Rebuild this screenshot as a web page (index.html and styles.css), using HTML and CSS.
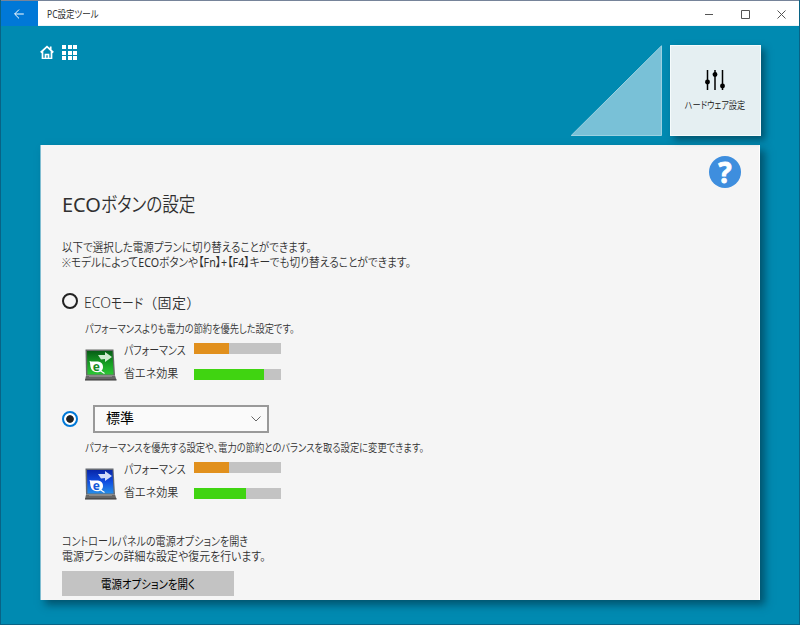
FILE: index.html
```html
<!DOCTYPE html>
<html lang="ja">
<head>
<meta charset="utf-8">
<title>PC設定ツール</title>
<link rel="stylesheet" href="styles.css">
</head>
<body>
<div class="window">
  <header class="titlebar">
    <button class="back" aria-label="戻る"><svg width="10" height="10" viewBox="0 0 10 10"><path d="M9.8 5H.8M5 .6.6 5 5 9.4"/></svg></button>
    <span class="app-name">PC設定ツール</span>
    <svg class="controls" width="80" height="10" viewBox="0 0 80 10"><path d="M0 5.5h8M36.5 1.5h8v8h-8zM72.5 1.5l8 8M80.500 1.500l-8 8"/></svg>
  </header>
  <nav class="top">
    <svg class="home" width="14" height="14" viewBox="0 0 14 14"><path d="M.7 7.500 7 1.700 13.300 7.500M2.500 6.500v7h9v-7M10.700 1.500v3"/><path d="M5.500 13.500v-4h3v4"/></svg>
    <span class="apps"><i></i><i></i><i></i><i></i><i></i><i></i><i></i><i></i><i></i></span>
    <svg class="triangle" width="92" height="91" viewBox="0 0 92 91"><path d="M91.500.8v89.700H1.200z"/></svg>
    <div class="tile">
      <svg width="20" height="20" viewBox="0 0 20 20"><path d="M2.500 0v20M10 0v20M17.500 0v20"/><circle cx="2.500" cy="12" r="1.700"/><circle cx="10" cy="4.500" r="1.700"/><circle cx="17.500" cy="16" r="1.700"/></svg>
      <span class="tile-label">ハードウェア設定</span>
    </div>
  </nav>
  <main class="panel">
    <div class="help"><span>?</span></div>
    <h1><span class="latin">ECO</span><span class="kana-title">ボタンの設定</span></h1>
    <div class="intro">
      <p class="intro-a">以下で選択した電源プランに切り替えることができます。</p>
      <p class="intro-b">※モデルによって<span class="latin">ECO</span>ボタンや【<span class="latin">Fn</span>】<span class="latin">+</span>【<span class="latin">F4</span>】キーでも切り替えることができます。</p>
    </div>
    <section class="plan plan-eco">
      <div class="choice"><span class="radio"></span><span class="eco-name">ECO<span class="mode">モード</span><span class="fixed">（固定）</span></span></div>
      <p class="desc desc-a">パフォーマンスよりも電力の節約を優先した設定です。</p>
      <div class="stats">
        <svg class="laptop" width="32" height="32" viewBox="0 0 32 32">
          <defs><linearGradient id="g" x1="0" y1="0" x2="0" y2="1"><stop offset="0" stop-color="#075d16"/><stop offset=".5" stop-color="#159b22"/><stop offset="1" stop-color="#2cc735"/></linearGradient></defs>
          <path d="M.5.5h28l1.500 26H1z" fill="#666b67"/><path d="M2 2h25.500l1 23.500H2.500z" fill="url(#g)"/><path d="M1 26.500h29l1.500 4.500H0z" fill="#666"/><path d="M0 30.500h31.500v1H0z" fill="#333"/><path d="M4 27.500h23" stroke="#888"/>
          <path d="M13 6h7V3l7 5-7 5v-3l-4 .500z" fill="#e7f7e7" opacity=".9"/><path d="M4.500 12c4 1.500 13.500-2 13.500 6 0 6.500-10 7-12 1.500-1-2.500-.5-4.500-1.500-7.500z" fill="#fff"/><path d="m15 21.500 4.500 3" stroke="#fff" stroke-width="1.200"/><text x="7.800" y="21.500" fill="#178b25">e</text>
        </svg>
        <div class="meters"><div class="meter"><span class="label"><span class="perf">パフォーマンス</span></span><b class="bar orange p40"></b></div><div class="meter"><span class="label second"><span class="save">省エネ効果</span></span><b class="bar green p80"></b></div></div>
      </div>
    </section>
    <section class="plan plan-std">
      <div class="choice"><span class="radio checked"></span><div class="select"><span>標準</span><svg width="10" height="6" viewBox="0 0 10 6"><path d="M.5.5 5 5 9.500.5"/></svg></div></div>
      <p class="desc desc-b">パフォーマンスを優先する設定や、電力の節約とのバランスを取る設定に変更できます。</p>
      <div class="stats">
        <svg class="laptop" width="32" height="32" viewBox="0 0 32 32">
          <defs><linearGradient id="b" x1="0" y1="0" x2="0" y2="1"><stop offset="0" stop-color="#0826a8"/><stop offset=".5" stop-color="#104de0"/><stop offset="1" stop-color="#258ee8"/></linearGradient></defs>
          <path d="M.5.5h28l1.500 26H1z" fill="#646973"/><path d="M2 2h25.500l1 23.500H2.500z" fill="url(#b)"/><path d="M1 26.500h29l1.500 4.500H0z" fill="#666"/><path d="M0 30.500h31.500v1H0z" fill="#333"/><path d="M4 27.500h23" stroke="#888"/>
          <path d="M13 6h7V3l7 5-7 5v-3l-4 .500z" fill="#e7efff" opacity=".9"/><path d="M4.500 12c4 1.500 13.500-2 13.500 6 0 6.500-10 7-12 1.500-1-2.500-.5-4.500-1.500-7.500z" fill="#fff"/><path d="m15 21.500 4.500 3" stroke="#fff" stroke-width="1.200"/><text x="7.800" y="21.500" fill="#1459d8">e</text>
        </svg>
        <div class="meters"><div class="meter"><span class="label"><span class="perf">パフォーマンス</span></span><b class="bar orange p40"></b></div><div class="meter"><span class="label second"><span class="save">省エネ効果</span></span><b class="bar green p60"></b></div></div>
      </div>
    </section>
    <div class="details">
      <p class="details-a">コントロールパネルの電源オプションを開き</p>
      <p class="details-b">電源プランの詳細な設定や復元を行います。</p>
    </div>
    <button class="open"><span>電源オプションを開く</span></button>
  </main>
</div>
</body>
</html>
```

FILE: styles.css
```css
* { box-sizing: border-box; }
body, p, h1 { margin: 0; }
body { font-family: "Noto Sans", "Noto Sans CJK JP", sans-serif; font-size: 12px; font-weight: 350; font-feature-settings: "palt"; color: #303030; white-space: nowrap; }
button { font: inherit; font-feature-settings: inherit; border: 0; padding: 0; color: inherit; }
svg { display: block; flex: none; }
.window { width: 800px; height: 625px; background: #008ab1; border: solid #096385; border-width: 0 1px 1px; overflow: hidden; }
.titlebar { height: 26px; margin: 0 -1px; border-top: 1px solid #76849a; background: #fff; display: flex; align-items: center; box-shadow: inset 0 -1px #eef4f7; }
.back { width: 38px; height: 25px; background: #0078d7; display: grid; place-items: center; }
.back svg { fill: none; stroke: #fff; }
.controls { margin-left: auto; margin-right: 15px; fill: none; stroke: #555; overflow: visible; }
.top { display: flex; height: 119px; padding: 19px 38px 0 39px; align-items: flex-start; }
.home { fill: none; stroke: #fff; stroke-width: 1.700; }
.apps { display: grid; grid-template-columns: repeat(3, 4px); gap: 1.500px; margin-left: 8px; }
.apps i { height: 4px; background: #fff; }
.triangle { margin-left: auto; margin-right: 8px; fill: #79c1d7; stroke: #9bd1e1; }
.tile { width: 91px; height: 91px; background: #e5eff2; border: 1px solid #f5fbfc; box-shadow: 4px 4px 7px #00304299; display: flex; flex-direction: column; align-items: center; padding-top: 24px; }
.tile svg { stroke: #000; stroke-width: 1.500; margin-right: 1px; }
.tile-label { margin-top: 7px; line-height: 16px; font-size: 10px; color: #111; margin-right: 1px; }
.panel { width: 720px; height: 455px; margin-left: 39px; padding: 10px 19px 0 21px; background: #f5f5f5; border: solid #fff; border-width: 0 1px; border-left-color: #80bdd1; box-shadow: 5px 5px 8px #00304299; }
.help { width: 32px; height: 32px; margin-left: auto; margin-right: -1px; margin-top: 1px; border-radius: 50%; background: #3e8ede; color: #fff; display: grid; place-items: center; font: 700 28px/32px "Noto Sans"; -webkit-text-stroke: .8px #fff; }
h1 { font-size: 20px; font-weight: 350; line-height: 28px; margin-top: 3px; }
.latin { font-weight: 400; }
.intro { margin-top: 21px; line-height: 15px; }
.plan-eco { margin-top: 22px; }
.choice { display: flex; align-items: center; }
.plan-eco .choice { height: 18px; }
.radio { width: 16px; height: 16px; margin-right: -1px; border: 2px solid #222; border-radius: 50%; flex: none; }
.radio.checked { border-color: #0078d7; background: radial-gradient(circle, #222 0 3.400px, #fff 4.200px); }
.eco-name { font-size: 14px; margin-left: 7px; padding-top: 2px; }
.fixed { font-feature-settings: normal; display: inline-block; margin-left: -6px; letter-spacing: .4px; }
.desc { margin: 11px 0 0 23px; font-size: 11px; line-height: 16px; }
.stats { display: flex; margin-left: 23px; margin-top: 5px; height: 44px; }
.laptop { margin-top: 7px; margin-right: 7px; }
.laptop text { font: 700 12px "Noto Sans"; }
.meter { display: flex; height: 26px; }
.label { width: 70px; line-height: 18px; }
.second { line-height: 12px; }
.bar { height: 11px; width: 87px; margin-top: 1px; background: #c3c3c3; display: block; }
.bar::before { content: ""; display: block; height: 100%; }
.orange::before { background: #e1901d; }
.green::before { background: #40d411; }
.p40::before { width: 40%; }
.p60::before { width: 60%; }
.p80::before { width: 80%; }
.plan-std { margin-top: 19px; }
.plan-std .choice { height: 28px; }
.select { display: flex; align-items: center; justify-content: space-between; width: 176px; height: 28px; margin: 0 0 0 16px; border: 2px solid #999; padding: 0 6px 0 11px; background: #fafafa; font-size: 14px; color: #000; font-weight: 400; }
.select > span { line-height: 20px; padding-bottom: 3px; }
.select svg { fill: none; stroke: #666; }
.plan-std .desc { margin-top: 7px; }
.details { margin-top: 29px; line-height: 15px; }
.open { display: block; width: 172px; height: 25px; margin-top: 7px; background: #c3c3c3; color: #000; font-weight: 400; }

/* Narrow Japanese lettering, condensed per label */
.app-name, .tile-label, .kana-title, .intro p, .mode, .desc, .perf, .save, .details p, .open span { display: inline-block; transform-origin: 0 50%; }
.intro p, .details p, .desc { display: block; width: max-content; }
.app-name { margin-left: 9px; font-size: 10px; font-weight: 400; transform: scaleX(.85); }
.tile-label, .open span { transform-origin: 50% 50%; }
.tile-label { transform: scaleX(.82); }
.kana-title { transform: scaleX(.83); }
.intro-a { transform: scaleX(.877); }
.intro-b { transform: scaleX(.891); }
.mode { transform: scaleX(.84); }
.desc-a { transform: scaleX(.837); }
.desc-b { transform: scaleX(.844); }
.perf { transform: scaleX(.827); }
.save { transform: scaleX(.92); }
.details-a { transform: scaleX(.838); }
.details-b { transform: scaleX(.91); }
.open span { transform: scaleX(.87); }
```
